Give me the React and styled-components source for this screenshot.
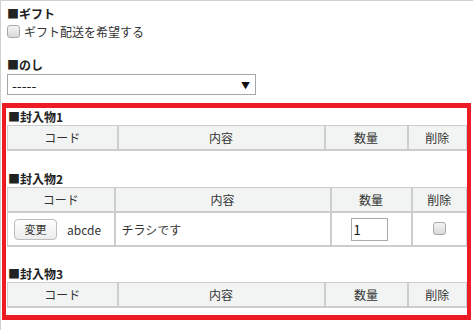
import styled, { createGlobalStyle } from "styled-components";

const GlobalStyle = createGlobalStyle`
  body {
    margin: 0;
    background: #fff;
    font-family: "Noto Sans CJK JP", "Noto Sans", sans-serif;
    font-size: 12px;
    color: #333;
  }
`;

const Page = styled.main`
  width: 472px;
  height: 329px;
  border-top: 1px solid #cfcfcf;
  border-left: 1px solid #cfcfcf;
`;

const Section = styled.section`
  padding: 4px 0 0 6px;
  margin-bottom: ${(p) => p.$gap || 0}px;
`;

const Title = styled.h3`
  margin: 0;
  font-size: 12px;
  font-weight: bold;
  line-height: 17px;
  color: #222;
  padding-left: ${(p) => p.$indent || 0}px;
`;

const CheckRow = styled.label`
  display: flex;
  align-items: center;
  gap: 4px;
  height: 19px;
  font-size: 12px;
  color: #333;
`;

const Check = styled.input.attrs({ type: "checkbox" })`
  appearance: none;
  margin: 0;
  width: 13px;
  height: 13px;
  border: 1px solid #a9a9a9;
  border-radius: 3px;
  background: linear-gradient(#f4f4f4, #d9d9d9);
  box-sizing: border-box;
`;

const SelectWrap = styled.div`
  position: relative;
  width: 249px;
  height: 21px;
  margin-top: 1px;
`;

const Select = styled.select`
  appearance: none;
  width: 100%;
  height: 100%;
  box-sizing: border-box;
  border: 1px solid #a6a6a6;
  border-radius: 0;
  background: #fff;
  padding: 0 4px;
  font-family: inherit;
  font-size: 14px;
  color: #222;
`;

const Arrow = styled.span`
  position: absolute;
  right: 6px;
  top: 5px;
  font-size: 9px;
  color: #111;
  pointer-events: none;
`;

const Highlight = styled.div`
  margin: 8px 0 0 1px;
  width: 469px;
  box-sizing: border-box;
  border: 5px solid #ed1c24;
  border-left-width: 4px;
  border-right-width: 4px;
  padding: 0 0 7px 1px;
`;

const Block = styled.div`
  margin-top: ${(p) => p.$top || 0}px;
`;

const Table = styled.table`
  width: 459px;
  border-collapse: collapse;
  table-layout: fixed;
  th,
  td {
    border: 1px solid #cdcdcd;
    border-width: 1px 2px 2px 1px;
  }
  tr > :last-child {
    border-right-width: 1px;
  }
`;

const Th = styled.th`
  height: 23px;
  padding: 0;
  background: #f2f3f3;
  font-weight: normal;
  font-size: 12px;
  color: #333;
  text-align: center;
`;

const Td = styled.td`
  height: 32px;
  padding: 0 6px;
  font-size: 12px;
  color: #333;
  text-align: ${(p) => p.$align || "left"};
`;

const CodeCell = styled.div`
  display: flex;
  align-items: center;
  gap: 10px;
`;

const Button = styled.button`
  width: 43px;
  height: 21px;
  padding: 0;
  border: 1px solid #bdbdbd;
  border-radius: 4px;
  background: linear-gradient(#ffffff, #ececec);
  font-family: inherit;
  font-size: 11px;
  color: #333;
`;

const QtyInput = styled.input`
  width: 37px;
  height: 23px;
  box-sizing: border-box;
  border: 1px solid #a9a9a9;
  padding: 0 2px;
  font-family: inherit;
  font-size: 13px;
  color: #111;
  margin-left: 13px;
`;

function EnclosureTable({ cols, rows }) {
  return (
    <Table>
      <colgroup>
        {cols.map((w, i) => (
          <col key={i} style={{ width: w }} />
        ))}
      </colgroup>
      <thead>
        <tr>
          <Th>コード</Th>
          <Th>内容</Th>
          <Th>数量</Th>
          <Th>削除</Th>
        </tr>
      </thead>
      <tbody>
        {rows.map((r) => (
          <tr key={r.code}>
            <Td>
              <CodeCell>
                <Button>変更</Button>
                {r.code}
              </CodeCell>
            </Td>
            <Td>{r.text}</Td>
            <Td>
              <QtyInput defaultValue={r.qty} />
            </Td>
            <Td $align="center">
              <Check />
            </Td>
          </tr>
        ))}
      </tbody>
    </Table>
  );
}

export default function App() {
  return (
    <Page>
      <GlobalStyle />
      <Section $gap={11}>
        <Title>■ギフト</Title>
        <CheckRow>
          <Check />
          ギフト配送を希望する
        </CheckRow>
      </Section>
      <Section>
        <Title>■のし</Title>
        <SelectWrap>
          <Select defaultValue="">
            <option value="">-----</option>
          </Select>
          <Arrow>▼</Arrow>
        </SelectWrap>
      </Section>
      <Highlight>
        <Block>
          <Title $indent={1}>■封入物1</Title>
          <EnclosureTable cols={[110, 207, 83, 59]} rows={[]} />
        </Block>
        <Block $top={19}>
          <Title $indent={1}>■封入物2</Title>
          <EnclosureTable
            cols={[107, 216, 81, 55]}
            rows={[{ code: "abcde", text: "チラシです", qty: "1" }]}
          />
        </Block>
        <Block $top={18}>
          <Title $indent={1}>■封入物3</Title>
          <EnclosureTable cols={[110, 207, 83, 59]} rows={[]} />
        </Block>
      </Highlight>
    </Page>
  );
}
